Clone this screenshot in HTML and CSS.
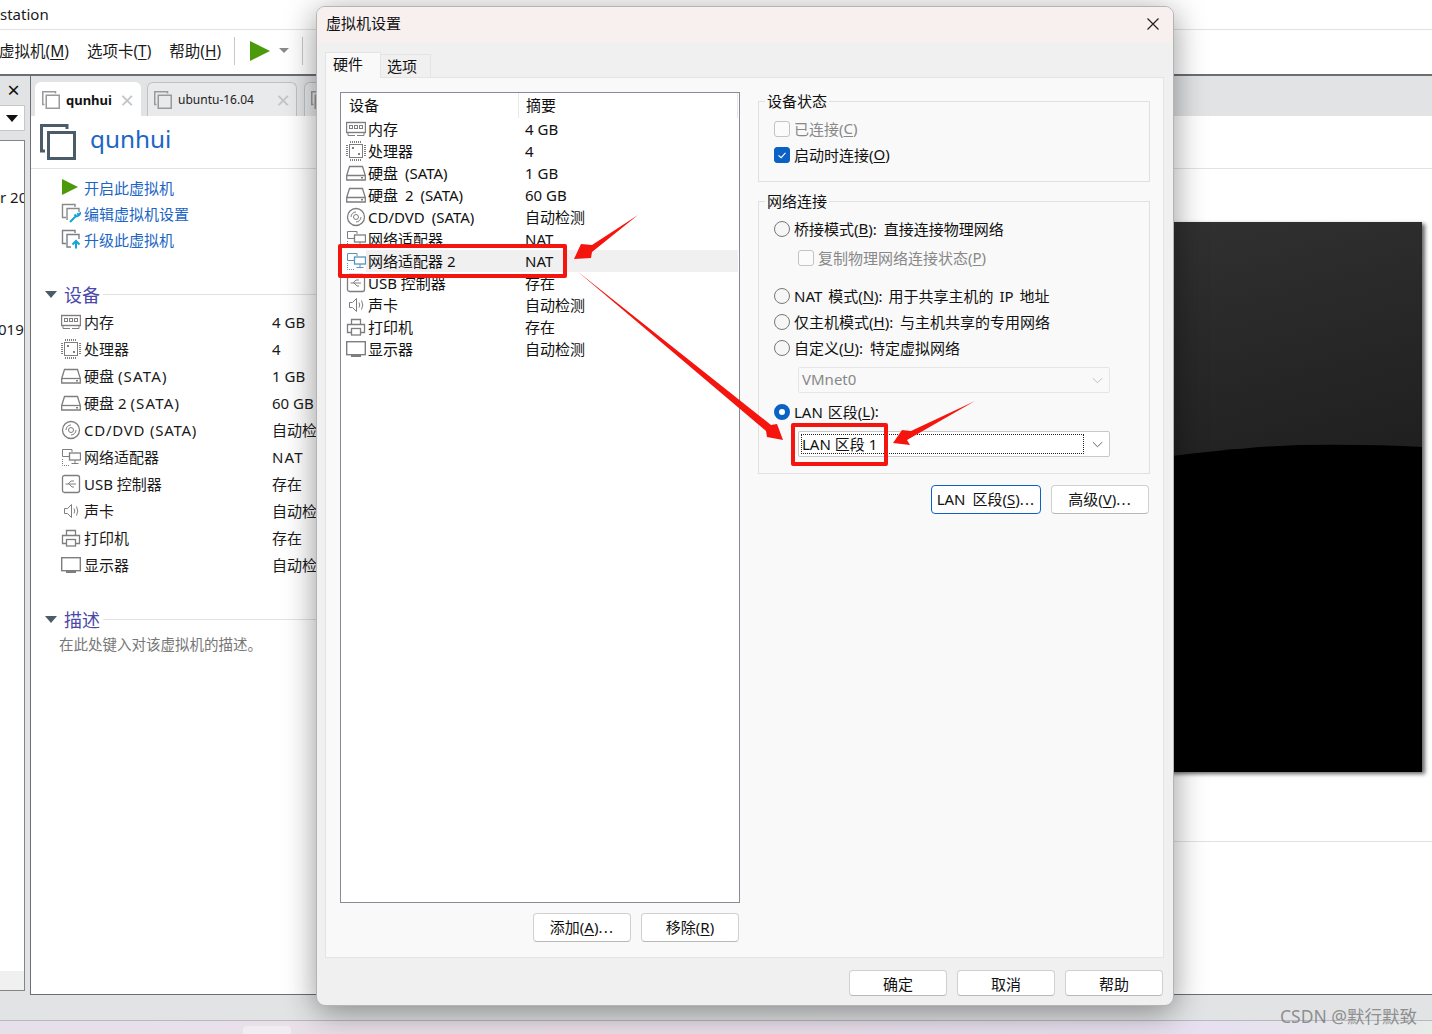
FILE: index.html
```html
<!DOCTYPE html>
<html lang="zh-CN">
<head>
<meta charset="utf-8">
<title>虚拟机设置</title>
<link rel="stylesheet" href="styles.css">
</head>
<body>
<svg class="defs" width="0" height="0" aria-hidden="true">
  <symbol id="i-ram" viewBox="0 0 20 20"><g fill="none" stroke="currentColor"><rect x="0.5" y="3.5" width="19" height="10" stroke-width="1.4"/><rect x="3.5" y="6.5" width="3" height="3"/><rect x="8.5" y="6.5" width="3" height="3"/><rect x="13.5" y="6.5" width="3" height="3"/><path d="M2 16.5H9M11 16.5H18M2 13.5V16.5M18 13.5V16.5"/></g></symbol>
  <symbol id="i-cpu" viewBox="0 0 20 20"><g fill="none" stroke="currentColor"><rect x="3.5" y="3.5" width="13" height="13"/><path stroke-width="2" stroke-dasharray="1 1" d="M4 1H16M4 19H16M1 4V16M19 4V16"/></g><rect x="6" y="6" width="2" height="2" fill="currentColor"/><rect x="12" y="12" width="2" height="2" fill="currentColor"/></symbol>
  <symbol id="i-hdd" viewBox="0 0 20 20"><g fill="none" stroke="currentColor" stroke-width="1.3"><path d="M0.7 12.5L3.5 3.5H16.5L19.3 12.5V17H0.7Z"/><path d="M0.7 12.5H19.3"/></g><rect x="15" y="14" width="2" height="1.5" fill="currentColor"/></symbol>
  <symbol id="i-cd" viewBox="0 0 20 20"><g fill="none" stroke="currentColor"><circle cx="10" cy="10" r="8.5" stroke-width="1.3"/><circle cx="10" cy="10" r="2.5"/><path d="M5 10A5 5 0 0 1 10 5M15 10A5 5 0 0 1 10 15"/></g></symbol>
  <symbol id="i-net" viewBox="0 0 20 20"><g fill="none" stroke="currentColor"><path d="M8 9.5H1.5V2.5H11V5"/><rect x="8.5" y="6" width="11" height="7" stroke-width="1.3"/><path d="M14 13V16M10.5 16.5H17.5"/><path stroke-dasharray="1 1" d="M1.5 12V18.5H9"/></g></symbol>
  <symbol id="i-usb" viewBox="0 0 20 20"><g fill="none" stroke="currentColor"><rect x="1.5" y="1.5" width="17" height="17" rx="2" stroke-width="1.3"/><path d="M4.5 10H15M7 10L10 7H13M8 10L11 13H13"/></g></symbol>
  <symbol id="i-snd" viewBox="0 0 20 20"><g fill="none" stroke="currentColor"><path d="M3.5 7.5H6.5L10.5 3.5V16.5L6.5 12.5H3.5Z"/><path d="M13 7.5Q14.5 10 13 12.5M15.5 5.5Q18 10 15.5 14.5"/></g></symbol>
  <symbol id="i-prn" viewBox="0 0 20 20"><g fill="none" stroke="currentColor" stroke-width="1.3"><path d="M5.5 7V2.5H14.5V7"/><path d="M5 15.5H1.5V7.5H18.5V15.5H15"/><rect x="5.5" y="11.5" width="9" height="6.5"/></g></symbol>
  <symbol id="i-mon" viewBox="0 0 20 20"><g fill="none" stroke="currentColor" stroke-width="1.4"><rect x="0.7" y="2.7" width="18.6" height="13"/></g><rect x="5" y="16" width="10" height="2" fill="currentColor"/></symbol>
  <symbol id="i-vm" viewBox="0 0 36 36"><g fill="none" stroke="currentColor" stroke-width="3"><rect x="8.5" y="8.5" width="26" height="26"/><path d="M5 27H1.5V1.5H27V5"/></g></symbol>
  <symbol id="i-play" viewBox="0 0 20 20"><path d="M0 0L20 10L0 20Z" fill="#4c9a0a"/></symbol>
</svg>

<div class="app">
  <div class="titlebar"><span>station</span></div>
  <div class="menubar">
    <span class="menu first">虚拟机(<u>M</u>)</span>
    <span class="menu">选项卡(<u>T</u>)</span>
    <span class="menu">帮助(<u>H</u>)</span>
    <span class="vsep"></span>
    <svg class="tool-play"><use href="#i-play"/></svg>
    <span class="tool-caret"></span>
    <span class="vsep"></span>
  </div>
  <div class="workspace">
    <aside class="sidebar">
      <div class="side-close">×</div>
      <div class="side-select"><span class="side-caret"></span></div>
      <div class="side-list">
        <div class="side-a">r 20</div>
        <div class="side-b">019</div>
      </div>
      <div class="side-foot"></div>
    </aside>
    <main class="main">
      <div class="tabbar">
        <div class="vmtab active"><svg class="tabicon"><use href="#i-vm"/></svg><b>qunhui</b><span class="tabx">×</span></div>
        <div class="vmtab wide"><svg class="tabicon"><use href="#i-vm"/></svg><span>ubuntu-16.04</span><span class="tabx">×</span></div>
        <div class="vmtab"><svg class="tabicon"><use href="#i-vm"/></svg></div>
      </div>
      <header class="vmhead"><svg class="vmicon"><use href="#i-vm"/></svg><h1>qunhui</h1></header>
      <div class="vmbody">
        <section class="details">
          <div class="actions">
            <a class="action"><svg class="aicon play"><use href="#i-play"/></svg>开启此虚拟机</a>
            <a class="action"><svg class="aicon" viewBox="0 0 20 20"><path d="M5 14.5H1.5V1.5H14V4" fill="none" stroke="#8a8a8a" stroke-width="1.4"/><path d="M6 17V5.5H18V9" fill="none" stroke="#8a8a8a" stroke-width="1.4"/><path d="M9 19L15 13L13.5 11.5M15 13Q18 14 19.5 10L17.5 11.5L16 10.5" fill="none" stroke="#13a5d8" stroke-width="2"/></svg>编辑虚拟机设置</a>
            <a class="action"><svg class="aicon" viewBox="0 0 20 20"><path d="M5 14.5H1.5V1.5H14V4" fill="none" stroke="#7a8088" stroke-width="1.4"/><path d="M10 18H6V5.5H18V10" fill="none" stroke="#7a8088" stroke-width="1.4"/><path d="M15 19.5V13M11.5 15.5L15 12L18.5 15.5" fill="none" stroke="#13a5d8" stroke-width="2"/></svg>升级此虚拟机</a>
          </div>
          <h2 class="sect first"><span class="tri"></span><span class="sect-t">设备</span><span class="sect-l"></span></h2>
          <ul class="devs">
            <li><svg class="dicon"><use href="#i-ram"/></svg><span class="dn">内存</span><span>4 GB</span></li>
            <li><svg class="dicon"><use href="#i-cpu"/></svg><span class="dn">处理器</span><span>4</span></li>
            <li><svg class="dicon"><use href="#i-hdd"/></svg><span class="dn">硬盘 <span class="sata">(SATA)</span></span><span>1 GB</span></li>
            <li><svg class="dicon"><use href="#i-hdd"/></svg><span class="dn">硬盘 2 <span class="sata">(SATA)</span></span><span>60 GB</span></li>
            <li><svg class="dicon"><use href="#i-cd"/></svg><span class="dn lat">CD/DVD (SATA)</span><span>自动检测</span></li>
            <li><svg class="dicon"><use href="#i-net"/></svg><span class="dn">网络适配器</span><span class="sata">NAT</span></li>
            <li><svg class="dicon"><use href="#i-usb"/></svg><span class="dn">USB 控制器</span><span>存在</span></li>
            <li><svg class="dicon"><use href="#i-snd"/></svg><span class="dn">声卡</span><span>自动检测</span></li>
            <li><svg class="dicon"><use href="#i-prn"/></svg><span class="dn">打印机</span><span>存在</span></li>
            <li><svg class="dicon"><use href="#i-mon"/></svg><span class="dn">显示器</span><span>自动检测</span></li>
          </ul>
          <h2 class="sect second"><span class="tri"></span><span class="sect-t">描述</span><span class="sect-l"></span></h2>
          <p class="desc">在此处键入对该虚拟机的描述。</p>
        </section>
        <section class="preview">
          <div class="screen"><svg class="screen-art" viewBox="0 0 722 550" preserveAspectRatio="none"><path d="M0 320Q420 230 600 223Q670 222 722 225V550H0Z" fill="#000"/></svg></div>
          <div class="preview-foot"></div>
        </section>
      </div>
    </main>
  </div>
  <div class="statusbar"></div>
  <div class="taskbar"><span class="taskitem"></span></div>
</div>

<div class="dialog">
  <div class="dlg-title"><span>虚拟机设置</span><svg class="dlg-close" viewBox="0 0 12 12"><path d="M0.5 0.5L11.5 11.5M11.5 0.5L0.5 11.5" stroke="#222" stroke-width="1.2" fill="none"/></svg></div>
  <div class="dlg-tabs"><span class="dtab on">硬件</span><span class="dtab">选项</span></div>
  <div class="dlg-panel">
    <div class="col-left">
      <div class="hwlist">
        <div class="hw-head"><span class="hh1">设备</span><span class="hh2">摘要</span></div>
        <div class="hw"><svg class="hi"><use href="#i-ram"/></svg><span class="hn">内存</span><span class="hv">4 GB</span></div>
        <div class="hw"><svg class="hi"><use href="#i-cpu"/></svg><span class="hn">处理器</span><span class="hv">4</span></div>
        <div class="hw"><svg class="hi"><use href="#i-hdd"/></svg><span class="hn">硬盘 (SATA)</span><span class="hv">1 GB</span></div>
        <div class="hw"><svg class="hi"><use href="#i-hdd"/></svg><span class="hn">硬盘 2 (SATA)</span><span class="hv">60 GB</span></div>
        <div class="hw"><svg class="hi"><use href="#i-cd"/></svg><span class="hn">CD/DVD (SATA)</span><span class="hv">自动检测</span></div>
        <div class="hw"><svg class="hi"><use href="#i-net"/></svg><span class="hn">网络适配器</span><span class="hv">NAT</span></div>
        <div class="hw sel"><svg class="hi"><use href="#i-net"/></svg><span class="hn tight">网络适配器 2</span><span class="hv">NAT</span></div>
        <div class="hw"><svg class="hi"><use href="#i-usb"/></svg><span class="hn tight">USB 控制器</span><span class="hv">存在</span></div>
        <div class="hw"><svg class="hi"><use href="#i-snd"/></svg><span class="hn">声卡</span><span class="hv">自动检测</span></div>
        <div class="hw"><svg class="hi"><use href="#i-prn"/></svg><span class="hn">打印机</span><span class="hv">存在</span></div>
        <div class="hw"><svg class="hi"><use href="#i-mon"/></svg><span class="hn">显示器</span><span class="hv">自动检测</span></div>
      </div>
      <div class="btnrow list-btns"><button class="btn">添加(<u>A</u>)<span class="dots">...</span></button><button class="btn">移除(<u>R</u>)</button></div>
    </div>
    <div class="col-right">
      <div class="group g1">
        <div class="legend">设备状态</div>
        <div class="opt dis"><span class="cb"></span>已连接(<u>C</u>)</div>
        <div class="opt"><span class="cb on"><svg viewBox="0 0 16 16"><path d="M4 8.5L7 11L12 5.5" fill="none" stroke="#fff" stroke-width="1.3"/></svg></span>启动时连接(<u>O</u>)</div>
      </div>
      <div class="group g2">
        <div class="legend">网络连接</div>
        <div class="opt"><span class="rb"></span>桥接模式(<u>B</u>): 直接连接物理网络</div>
        <div class="opt sub dis"><span class="cb"></span>复制物理网络连接状态(<u>P</u>)</div>
        <div class="opt after-sub"><span class="rb"></span>NAT 模式(<u>N</u>): 用于共享主机的 IP 地址</div>
        <div class="opt"><span class="rb"></span>仅主机模式(<u>H</u>): 与主机共享的专用网络</div>
        <div class="opt"><span class="rb"></span>自定义(<u>U</u>): 特定虚拟网络</div>
        <div class="combo dis"><span class="combo-v">VMnet0</span><svg class="chev" viewBox="0 0 12 7"><path d="M1 1L6 6L11 1" fill="none" stroke="#bbb"/></svg></div>
        <div class="opt lanopt"><span class="rb on"></span>LAN 区段(<u>L</u>):</div>
        <div class="combo lan"><span class="combo-v focus">LAN 区段 1</span><svg class="chev" viewBox="0 0 12 7"><path d="M1 1L6 6L11 1" fill="none" stroke="#555"/></svg></div>
      </div>
      <div class="btnrow net-btns"><button class="btn def">LAN 区段(<u>S</u>)<span class="dots">...</span></button><button class="btn adv">高级(<u>V</u>)<span class="dots">...</span></button></div>
    </div>
  </div>
  <div class="dlg-foot"><button class="btn">确定</button><button class="btn">取消</button><button class="btn">帮助</button></div>
</div>

<svg class="marks" viewBox="0 0 1432 1034" aria-hidden="true">
  <polygon fill="#f5150f" points="638,215 592,245 581,244 574,259 591,258 592,252"/>
  <polygon fill="#f5150f" points="577,271 771,425 777,424 783,440 767,437 766,431"/>
  <polygon fill="#f5150f" points="975,401 911,431 902,430 893,443 910,445 907,440"/>
</svg>
<div class="redbox r1"></div>
<div class="redbox r2"></div>
<div class="watermark">CSDN @默行默致</div>
</body>
</html>
```

FILE: styles.css
```css
* { box-sizing: border-box; }
html, body { margin: 0; padding: 0; }
body {
  width: 1432px; height: 1034px; overflow: hidden; position: relative; background: #fff;
  font-family: "Noto Sans", "Noto Sans CJK SC", sans-serif; font-size: 15px; color: #1a1a1a;
}
.defs { position: absolute; }
svg { display: block; }
ul, h1, h2, p { margin: 0; padding: 0; font-weight: normal; }
u { text-underline-offset: 2px; }

.app { display: flex; flex-direction: column; height: 1034px; }
.titlebar { height: 30px; border-bottom: 1px solid #e2e2e2; line-height: 28px; flex: none; }
.menubar { height: 46px; flex: none; border-bottom: 2px solid #6c6e72; display: flex; align-items: center; font-size: 15.5px; padding-bottom: 3px; }
.menu { margin-right: 18px; white-space: nowrap; }
.menu.first { margin-left: -1px; }
.vsep { width: 1px; height: 28px; background: #c8c8c8; margin-left: -5px; }
.tool-play { width: 20px; height: 20px; margin-left: 15px; }
.tool-caret { width: 0; height: 0; border: 5px solid transparent; border-top: 5px solid #8a8a8a; border-bottom: 0; margin: 0 13px 0 9px; }
.tool-caret + .vsep { margin-left: 0; }

.workspace { flex: 1; display: flex; min-height: 0; background: #e2e3e5; }
.sidebar { width: 30px; flex: none; display: flex; flex-direction: column; padding: 0 5px 4px 0; }
.side-close { height: 29px; text-align: center; font-size: 22px; line-height: 26px; color: #111; padding-left: 2px; }
.side-select { height: 26px; background: #fff; border: 1px solid #c8c8c8; border-left: 0; display: flex; align-items: center; justify-content: center; }
.side-caret { border: 6px solid transparent; border-top: 7px solid #111; border-bottom: 0; }
.side-list { flex: 1; margin-top: 9px; background: #fff; border-top: 1px solid #858585; border-right: 1px solid #858585; overflow: hidden; white-space: nowrap; }
.side-a { margin-top: 46px; line-height: 20px; }
.side-b { margin: 112px 0 0 -2px; line-height: 20px; }
.side-foot { height: 20px; background: #f0f0f0; border-right: 1px solid #858585; border-bottom: 1px solid #858585; }

.main { flex: 1; min-width: 0; background: #fff; border-left: 1px solid #6c6e72; border-bottom: 1px solid #6c6e72; display: flex; flex-direction: column; }
.tabbar { height: 40px; flex: none; background: #e2e3e5; display: flex; align-items: flex-end; padding-left: 4px; gap: 7px; }
.vmtab { width: 100px; height: 34px; border: 1px solid #c0c1c4; border-bottom: 0; border-radius: 6px 6px 0 0; background: #e9eaec; display: flex; align-items: center; padding-left: 6px; font-size: 12px; color: #222; }
.vmtab.active { width: 106px; margin-right: -1px; background: #fff; border-color: #fff; font-size: 13px; color: #111; }
.vmtab.wide { width: 150px; }
.tabicon { width: 18px; height: 18px; flex: none; color: #9a9a9a; margin-right: 6px; }
.tabx { margin-left: auto; margin-right: 6px; font-size: 24px; line-height: 20px; color: #c4c4c4; font-weight: normal; }
.vmhead { height: 53px; flex: none; border-bottom: 1px solid #e2e2e2; display: flex; align-items: center; padding: 0 0 0 9px; }
.vmicon { width: 36px; height: 36px; color: #4b5b68; }
.vmhead h1 { margin: -7px 0 0 14px; font-size: 24.3px; color: #1b66c4; }
.vmbody { flex: 1; display: flex; min-height: 0; }
.details { width: 660px; flex: none; }
.actions { padding: 5px 0 0 31px; }
.action { display: flex; align-items: center; height: 26px; color: #1b66c4; margin-left: -1px; }
.aicon { width: 20px; height: 20px; margin-right: 3px; flex: none; }
.aicon.play { width: 16px; height: 18px; margin: 0 6px 0 1px; }
.sect { display: flex; align-items: center; height: 22px; padding-left: 14px; font-size: 18px; color: #4a48a8; }
.sect.first { margin-top: 31px; }
.sect.second { margin-top: 30px; }
.tri { border: 6px solid transparent; border-top: 7px solid #4b5b68; border-bottom: 0; margin-right: 7px; }
.sect-l { flex: 1; height: 1px; background: #e2e2e2; margin-left: 3px; }
.devs { list-style: none; margin-top: 3px; }
.devs li { height: 27px; display: flex; align-items: center; padding-left: 30px; white-space: nowrap; }
.dicon { width: 20px; height: 20px; margin-right: 3px; color: #7e7e7e; flex: none; }
.dn { width: 188px; }
.lat { letter-spacing: .75px; }
.sata { letter-spacing: 1.2px; }
.desc { margin: 4px 0 0 28px; font-size: 14.5px; line-height: 20px; color: #777; }
.preview { flex: 1; padding: 53px 10px 0 0; display: flex; flex-direction: column; }
.screen { height: 550px; flex: none; background: linear-gradient(165deg, #383838, #1e1e1e 60%); box-shadow: 3px 2px 4px rgba(0,0,0,.6); }
.screen-art { width: 100%; height: 100%; }
.preview-foot { margin: 69px -10px 0 0; border-top: 1px solid #e2e2e2; flex: 1; }
.statusbar { height: 26px; flex: none; background: #e2e3e5; border-bottom: 1px solid #b8b8bc; }
.taskbar { height: 13px; flex: none; background: linear-gradient(90deg, #e6e0ea, #ece0ea 40%, #e6e0f0 85%, #e6ece8); }
.taskitem { display: block; width: 48px; height: 8px; margin: 0 0 0 243px; position: relative; top: 5px; background: #f0ecf2; border-radius: 4px 4px 0 0; }

.dialog { position: absolute; left: 316px; top: 6px; width: 858px; height: 1000px; background: #f0f0f0; border: 1px solid #b4b4b4; border-radius: 9px; box-shadow: 0 6px 32px rgba(0,0,0,.42); display: flex; flex-direction: column; overflow: hidden; font-size: 15px; word-spacing: 3px; color: #111; }
.dlg-title { height: 36px; flex: none; background: #f8efef; display: flex; align-items: center; justify-content: space-between; padding: 0 14px 5px 9px; }
.dlg-close { width: 12px; height: 12px; margin-top: 3px; }
.dlg-tabs { height: 25px; margin: 9px 0 0 8px; display: flex; align-items: flex-end; flex: none; position: relative; z-index: 1; }
.dtab { width: 50px; height: 23px; background: #f0f0f0; border: 1px solid #e4e4e4; border-left: 0; border-bottom: 0; padding-left: 6px; line-height: 22px; }
.dtab.on { width: 56px; height: 26px; background: #f9f9f9; border-left: 1px solid #e4e4e4; padding-left: 7px; line-height: 22px; margin-bottom: -1px; }
.dlg-panel { flex: 1; min-height: 0; margin: 0 9px 0 8px; background: #f9f9f9; border: 1px solid #e4e4e4; display: flex; padding: 14px 0 0 14px; }
.col-left { width: 400px; flex: none; }
.hwlist { height: 811px; background: #fff; border: 1px solid #878b95; }
.hw-head { height: 25px; display: flex; align-items: center; }
.hh1 { width: 177px; padding-left: 8px; line-height: 25px; }
.hh2 { flex: 1; padding-left: 7px; line-height: 25px; margin-right: 1px; border-left: 1px solid #e8e8e8; border-right: 1px solid #e8e8e8; }
.hw { display: grid; grid-template-columns: 25px 152px 220px; height: 22px; line-height: 22px; }
.hi { width: 20px; height: 20px; margin: 1px 0 0 5px; color: #7e7e7e; }
.hn { padding-left: 2px; white-space: nowrap; }
.hn.tight { word-spacing: 0; }
.hv { padding-left: 7px; word-spacing: 0; }
.hw.sel .hn, .hw.sel .hv { background: #f0f0f0; }
.hw.sel .hi { color: #5a94ba; }
.btnrow { display: flex; justify-content: flex-end; gap: 10px; }
.list-btns { margin-top: 10px; padding-right: 1px; }
.btn { width: 98px; height: 29px; padding: 0 0 3px; background: #fff; border: 1px solid #d0d0d0; border-bottom-color: #b8b8b8; border-radius: 4px; font: inherit; word-spacing: inherit; color: #111; }
.dots { letter-spacing: 1.2px; }
.col-right { width: 392px; margin-left: 18px; flex: none; padding-top: 9px; }
.group { border: 1px solid #e0e0e0; padding-left: 15px; }
.g1 { height: 81px; }
.g2 { height: 273px; margin-top: 19px; }
.legend { width: fit-content; margin: -11px 0 5px -9px; padding: 0 2px; height: 20px; line-height: 20px; background: #f9f9f9; }
.opt { height: 26px; display: flex; align-items: center; white-space: pre; padding-bottom: 2px; }
.opt.dis { color: #888; }
.cb { width: 16px; height: 16px; border: 1px solid #c4c4c4; border-radius: 3px; background: #fbfbfb; margin: 1px 4px 0 0; flex: none; }
.cb.on { background: #0c62c4; border-color: #0c62c4; }
.cb svg { width: 14px; height: 14px; }
.rb { width: 16px; height: 16px; border: 1px solid #777; border-radius: 50%; background: #f6f6f6; margin: 1px 4px 0 0; flex: none; }
.rb.on { border: 5px solid #0c62c4; background: #fff; }
.opt.sub { margin: 3px 0 0 24px; }
.opt.after-sub { margin-top: 12px; word-spacing: 2px; }
.combo { width: 312px; height: 26px; margin: 6px 0 0 24px; border: 1px solid #c8c8c8; border-radius: 2px; background: #fff; display: flex; align-items: center; padding: 2px; }
.combo.dis { background: #f9f9f9; border-color: #e6e6e6; color: #888; }
.combo.dis .combo-v { padding-left: 1px; }
.combo-v { flex: 1; height: 20px; line-height: 19px; white-space: pre; }
.combo-v.focus { border: 1px dotted #222; line-height: 18px; word-spacing: 0; }
.chev { width: 11px; height: 7px; margin: 0 4px 0 8px; flex: none; }
.lanopt { margin-top: 6px; word-spacing: 1px; }
.lan { margin-top: 6px; }
.net-btns { margin-top: 11px; padding-right: 1px; }
.btn.def { width: 110px; border: 1px solid #0c62c4; }
.dlg-foot { height: 47px; flex: none; display: flex; justify-content: flex-end; gap: 10px; padding: 12px 10px 9px 0; }
.dlg-foot .btn { height: 26px; padding: 0; }

.marks { position: absolute; left: 0; top: 0; width: 1432px; height: 1034px; pointer-events: none; }
.redbox { position: absolute; border: 4px solid #f5150f; border-radius: 2px; }
.r1 { left: 338px; top: 244px; width: 229px; height: 34px; }
.r2 { left: 791px; top: 423px; width: 97px; height: 43px; }
.watermark { position: absolute; right: 15px; top: 1004px; font-size: 17.5px; line-height: 24px; color: rgba(120,120,120,.8); }
```
